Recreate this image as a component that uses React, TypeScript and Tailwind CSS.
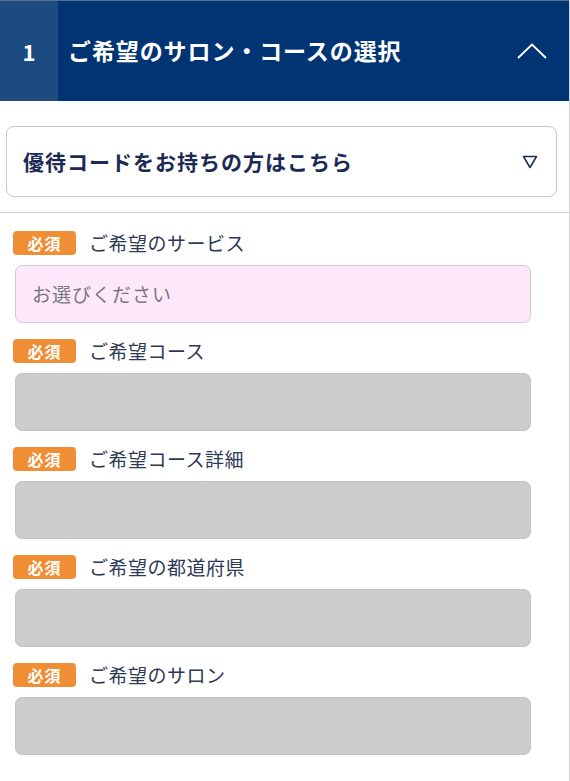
const fields = [
  { label: "ご希望のサービス", placeholder: "お選びください", active: true },
  { label: "ご希望コース" },
  { label: "ご希望コース詳細" },
  { label: "ご希望の都道府県" },
  { label: "ご希望のサロン" },
];

const font = { fontFamily: '"Noto Sans CJK JP", "Noto Sans", sans-serif' };

export default function App() {
  return (
    <div
      className="w-[570px] min-h-[781px] bg-white border-r border-[#d4d4d4]"
      style={font}
    >
      {/* section header */}
      <div className="flex h-[101px] border-t border-[#5a6f93] bg-[#003473]">
        <div className="flex w-[58px] items-center justify-center bg-[#1e4a82] text-[22px] font-bold text-white">
          1
        </div>
        <div className="flex flex-1 items-center pb-[2px] pl-[10px] text-[23px] font-bold tracking-[0.9px] text-white">
          ご希望のサロン・コースの選択
        </div>
        <div className="flex w-[72px] items-center justify-center pr-[2px]">
          <svg width="30" height="16" viewBox="0 0 30 16" fill="none">
            <path d="M1 15 L15 1.5 L29 15" stroke="white" strokeWidth="1.8" />
          </svg>
        </div>
      </div>

      {/* coupon toggle */}
      <div className="pl-[6px] pr-[12px] pt-[25px] pb-[15px] border-b border-[#cfcfcf]">
        <div className="flex h-[71px] items-center justify-between rounded-[8px] border border-[#c8c8c8] pl-[16px] pr-[18px]">
          <span className="text-[21px] font-bold tracking-[1px] text-[#1b2a55]">
            優待コードをお持ちの方はこちら
          </span>
          <svg width="16" height="14" viewBox="0 0 16 14" fill="none">
            <path d="M1.5 1.5 H14.5 L8 12.5 Z" stroke="#1b2a55" strokeWidth="1.5" strokeLinejoin="round" />
          </svg>
        </div>
      </div>

      {/* form fields */}
      <div className="flex flex-col gap-[16px] pl-[13px] pr-[38px] pt-[18px]">
        {fields.map((f) => (
          <div key={f.label} className="flex flex-col gap-[10px]">
            <div className="flex h-[24px] items-center gap-[13px]">
              <span className="flex h-[24px] w-[63px] items-center justify-center rounded-[4px] bg-[#ef8e35] text-[16px] font-bold leading-none tracking-[1px] text-white">
                必須
              </span>
              <span className="text-[19px] leading-[24px] tracking-[0.5px] text-[#2d3a55]">
                {f.label}
              </span>
            </div>
            <div
              className={`ml-[2px] flex h-[58px] items-center rounded-[7px] border px-[16px] text-[19px] tracking-[1px] text-[#777] ${
                f.active
                  ? "border-[#cfcbd6] bg-[#fde8fb]"
                  : "border-[#c4c4c4] bg-[#cccccc]"
              }`}
            >
              {f.placeholder}
            </div>
          </div>
        ))}
      </div>
    </div>
  );
}
